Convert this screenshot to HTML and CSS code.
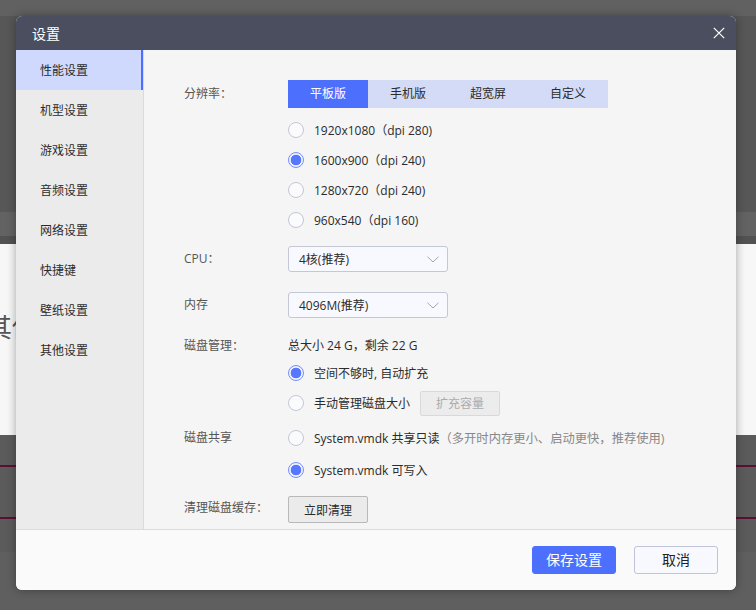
FILE: index.html
```html
<!DOCTYPE html>
<html lang="zh-CN">
<head>
<meta charset="utf-8">
<title>设置</title>
<link rel="stylesheet" href="styles.css">
</head>
<body>
<div class="page">
  <div class="bg-top"></div>
  <div class="bg-a"></div>
  <div class="bg-b"></div>
  <div class="bg-c"></div>
  <div class="bg-white"><span class="bg-title">其他设置</span></div>
  <div class="bg-d"><div class="bg-line"></div><div class="bg-line"></div></div>
  <div class="bg-e"></div>
</div>

<div class="dialog">
  <header class="dlg-head">
    <span class="dlg-title">设置</span>
    <button class="dlg-close" aria-label="关闭">
      <svg width="12" height="12" viewBox="0 0 12 12"><path d="M0.8 0.8L11.2 11.2M11.2 0.8L0.8 11.2" stroke="#fff" stroke-width="1.2" fill="none"/></svg>
    </button>
  </header>

  <div class="dlg-main">
    <nav class="side">
      <div class="side-item active">性能设置</div>
      <div class="side-item">机型设置</div>
      <div class="side-item">游戏设置</div>
      <div class="side-item">音频设置</div>
      <div class="side-item">网络设置</div>
      <div class="side-item">快捷键</div>
      <div class="side-item">壁纸设置</div>
      <div class="side-item">其他设置</div>
    </nav>

    <section class="content">
      <div class="field field-res">
        <div class="label">分辨率：</div>
        <div class="ctrl">
          <div class="tabs">
            <div class="tab on">平板版</div>
            <div class="tab">手机版</div>
            <div class="tab">超宽屏</div>
            <div class="tab">自定义</div>
          </div>
          <div class="radio-list res-list">
            <div class="radio"><span class="dot"></span><span>1920x1080（dpi 280)</span></div>
            <div class="radio"><span class="dot on"></span><span>1600x900（dpi 240)</span></div>
            <div class="radio"><span class="dot"></span><span>1280x720（dpi 240)</span></div>
            <div class="radio"><span class="dot"></span><span>960x540（dpi 160)</span></div>
          </div>
        </div>
      </div>

      <div class="field field-cpu">
        <div class="label">CPU：</div>
        <div class="ctrl">
          <div class="select"><span>4核(推荐)</span>
            <svg class="chev" width="12" height="7" viewBox="0 0 12 7"><polyline points="0.5,0.8 6,6 11.5,0.8" fill="none" stroke="#a0a3b0" stroke-width="1"/></svg>
          </div>
        </div>
      </div>

      <div class="field field-mem">
        <div class="label">内存</div>
        <div class="ctrl">
          <div class="select"><span>4096M(推荐)</span>
            <svg class="chev" width="12" height="7" viewBox="0 0 12 7"><polyline points="0.5,0.8 6,6 11.5,0.8" fill="none" stroke="#a0a3b0" stroke-width="1"/></svg>
          </div>
        </div>
      </div>

      <div class="field field-disk">
        <div class="label">磁盘管理：</div>
        <div class="ctrl">
          <div class="info">总大小 24 G，剩余 22 G</div>
          <div class="radio-list disk-list">
            <div class="radio"><span class="dot on"></span><span>空间不够时, 自动扩充</span></div>
            <div class="radio"><span class="dot"></span><span>手动管理磁盘大小</span><span class="btn btn-disabled">扩充容量</span></div>
          </div>
        </div>
      </div>

      <div class="field field-share">
        <div class="label">磁盘共享</div>
        <div class="ctrl">
          <div class="radio-list share-list">
            <div class="radio"><span class="dot"></span><span>System.vmdk 共享只读<span class="hint">（多开时内存更小、启动更快，推荐使用)</span></span></div>
            <div class="radio"><span class="dot on"></span><span>System.vmdk 可写入</span></div>
          </div>
        </div>
      </div>

      <div class="field field-clean">
        <div class="label">清理磁盘缓存：</div>
        <div class="ctrl">
          <span class="btn btn-clean">立即清理</span>
        </div>
      </div>
    </section>
  </div>

  <footer class="dlg-foot">
    <button class="fbtn fbtn-primary">保存设置</button>
    <button class="fbtn fbtn-default">取消</button>
  </footer>
</div>
</body>
</html>
```

FILE: styles.css
```css
* { box-sizing: border-box; }
html, body { margin: 0; padding: 0; }
body {
  width: 756px;
  height: 610px;
  overflow: hidden;
  background: #5e5e5e;
  font-family: "Open Sans", "Noto Sans CJK SC", "Noto Sans", sans-serif;
  position: relative;
}

/* background page (dimmed) */
.page { width: 756px; }
.bg-top { height: 16px; background: #616161; }
.bg-a { height: 196px; background: #575757; }
.bg-b { height: 24px; background: #626262; }
.bg-c { height: 8px; background: #525252; }
.bg-white {
  height: 191px;
  background: #f7f7f7;
  padding-top: 68px;
  overflow: hidden;
  white-space: nowrap;
}
.bg-title {
  display: block;
  margin-left: -14px;
  font-family: "Noto Sans CJK SC", sans-serif;
  font-size: 26px;
  line-height: 28px;
  color: #555;
}
.bg-d {
  height: 117px;
  background: #5b5b5b;
  padding-top: 30px;
}
.bg-line { height: 2px; background: #5c1030; margin-bottom: 50px; }
.bg-e { height: 58px; background: #5f5f5f; }

/* dialog */
.dialog {
  position: absolute;
  left: 16px;
  top: 16px;
  width: 720px;
  height: 574px;
  border-radius: 6px;
  overflow: hidden;
  display: flex;
  flex-direction: column;
  background: #f5f5f5;
  box-shadow: 0 0 10px rgba(0, 0, 0, 0.35);
}
.dlg-head {
  height: 34px;
  flex: none;
  background: #4b4e5e;
  display: flex;
  align-items: center;
  justify-content: space-between;
  padding: 0 7px 0 16px;
}
.dlg-title { color: #fff; font-size: 14px; line-height: 20px; padding-top: 2px; }
.dlg-close {
  width: 20px;
  height: 20px;
  padding: 0;
  border: 0;
  background: none;
  display: flex;
  align-items: center;
  justify-content: center;
}

.dlg-main { flex: 1; display: flex; min-height: 0; }
.side {
  width: 128px;
  flex: none;
  background: #ebebeb;
  border-right: 1px solid #dadada;
}
.side-item {
  height: 40px;
  line-height: 38px;
  padding: 2px 0 0 24px;
  font-size: 12px;
  color: #2b2b2b;
}
.side-item.active {
  background: #cfd9fd;
  box-shadow: inset -2px 0 0 #4d6ffe;
}

.content {
  flex: 1;
  padding: 30px 0 0 40px;
  background: #f5f5f5;
  overflow: hidden;
}
.field { display: flex; }
.label {
  width: 104px;
  flex: none;
  font-size: 12px;
  color: #555;
  white-space: nowrap;
}
.ctrl { flex: 1; font-size: 12px; color: #2b2b2b; }

.field-res .label { line-height: 28px; }
.tabs { display: flex; }
.tab {
  width: 80px;
  height: 28px;
  line-height: 28px;
  text-align: center;
  background: #d3dbf7;
  color: #2b2b2b;
  font-size: 12px;
}
.tab.on { background: #4d6ffe; color: #fff; }

.radio-list { display: flex; flex-direction: column; }
.res-list { margin-top: 7px; }
.radio {
  display: flex;
  align-items: center;
  height: 30px;
  gap: 10px;
  font-size: 12px;
  color: #2b2b2b;
  white-space: nowrap;
}
.dot {
  width: 16px;
  height: 16px;
  flex: none;
  border: 1px solid #c3c6d6;
  border-radius: 50%;
  background: #fbfbfe;
}
.dot.on {
  border-color: #7590ff;
  background: radial-gradient(circle, #5877ff 0, #5877ff 5px, #eef1ff 5.6px);
}

.field-cpu { margin-top: 11px; }
.field-mem { margin-top: 20px; }
.field-cpu .label, .field-mem .label { line-height: 26px; }
.select {
  width: 160px;
  height: 26px;
  border: 1px solid #c4c7d6;
  border-radius: 3px;
  background: #f8f9ff;
  display: flex;
  align-items: center;
  justify-content: space-between;
  padding: 0 8px 0 10px;
  font-size: 12px;
  color: #2b2b2b;
}
.chev { display: block; }

.field-disk { margin-top: 18px; }
.field-disk .label { line-height: 20px; }
.info { line-height: 20px; }
.disk-list { margin-top: 2px; }

.btn {
  display: inline-flex;
  align-items: center;
  justify-content: center;
  width: 80px;
  font-size: 12px;
  border-radius: 2px;
}
.btn-disabled {
  height: 25px;
  background: #ececec;
  border: 1px solid #d9d9d9;
  color: #ababab;
}

.field-share { margin-top: 4px; }
.field-share .label { line-height: 32px; }
.share-list .radio { height: 32px; }
.hint { color: #888; font-size: 12.3px; }

.field-clean { margin-top: 10px; }
.field-clean .label { line-height: 24px; }
.btn-clean {
  height: 27px;
  background: #ebebeb;
  border: 1px solid #b9b9b9;
  color: #2b2b2b;
}

.dlg-foot {
  height: 61px;
  flex: none;
  border-top: 1px solid #dcdcdc;
  background: #fafafa;
  display: flex;
  justify-content: flex-end;
  align-items: center;
  gap: 18px;
  padding-right: 18px;
}
.fbtn {
  width: 84px;
  height: 28px;
  border-radius: 3px;
  font-family: inherit;
  font-size: 14px;
  padding: 0;
  line-height: 26px;
}
.fbtn-primary { background: #4d6ffe; border: 1px solid #4d6ffe; color: #fff; }
.fbtn-default { background: #f8f9ff; border: 1px solid #c0c4d8; color: #222; }
```
